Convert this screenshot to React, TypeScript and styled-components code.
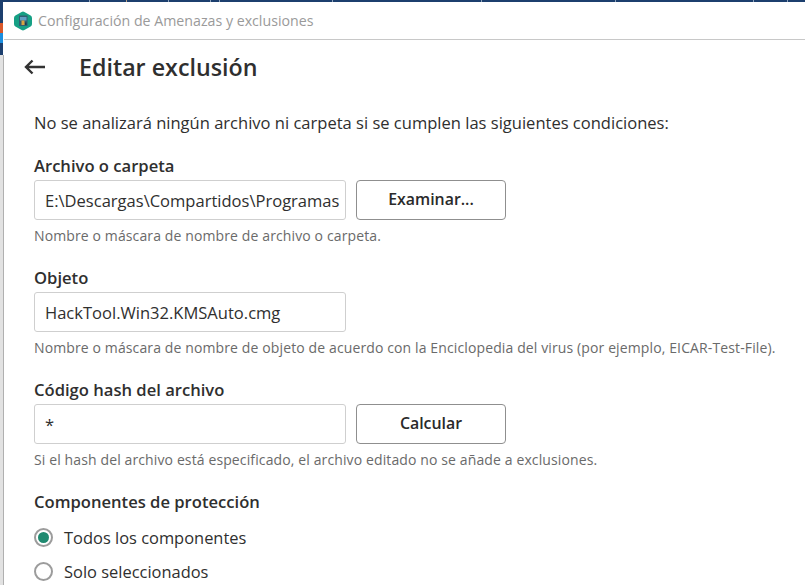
import React from "react";
import styled, { createGlobalStyle } from "styled-components";

const Global = createGlobalStyle`
  html, body { margin: 0; padding: 0; background: #fff; }
  body { font-family: "Open Sans", "Noto Sans", sans-serif; overflow: hidden; }
`;

const Desktop = styled.div`
  width: 805px;
  height: 585px;
  display: flex;
  flex-direction: column;
  overflow: hidden;
  background: #fff;
`;

const TopStrip = styled.div`
  height: 2px;
  flex: none;
  background-color: #1c3f6e;
  background-image:
    linear-gradient(#8ea3bb, #8ea3bb), linear-gradient(#b9a283, #b9a283),
    linear-gradient(#8ea3bb, #8ea3bb), linear-gradient(#8ea3bb, #8ea3bb),
    linear-gradient(#8ea3bb, #8ea3bb), linear-gradient(#8ea3bb, #8ea3bb),
    linear-gradient(#8ea3bb, #8ea3bb), linear-gradient(#8ea3bb, #8ea3bb),
    linear-gradient(#8ea3bb, #8ea3bb), linear-gradient(#8ea3bb, #8ea3bb);
  background-size: 1px 2px;
  background-repeat: no-repeat;
  background-position: 89px 0, 126px 0, 168px 0, 210px 0, 219px 0, 332px 0,
    481px 0, 615px 0, 753px 0, 787px 0;
`;

const Main = styled.div`
  flex: 1;
  min-height: 0;
  display: flex;
`;

const Edge = styled.div`
  width: 4px;
  flex: none;
  display: flex;
  flex-direction: column;
`;

const EdgeBlock = styled.div<{ $h: number; $c: string }>`
  width: 3px;
  height: ${(p) => p.$h}px;
  flex: none;
  background: ${(p) => p.$c};
`;

const EdgeRest = styled.div`
  flex: 1;
  background: #e2e2e2;
  border-right: 1px solid #b0b0b0;
`;

const Win = styled.div`
  flex: 1;
  min-width: 0;
  display: flex;
  flex-direction: column;
`;

const TitleBar = styled.div`
  height: 37px;
  flex: none;
  display: flex;
  align-items: center;
  gap: 6px;
  padding: 0 0 0 10px;
  border-bottom: 1px solid #c8c8c8;
  font-size: 14.2px;
  color: #9a9a9a;
`;

const PageHead = styled.div`
  height: 54px;
  flex: none;
  display: flex;
  align-items: center;
  gap: 31px;
  padding: 0 0 0 18px;
`;

const Heading = styled.h1`
  margin: 0;
  font-size: 23.25px;
  font-weight: 600;
  color: #2f2f2f;
`;

const Body = styled.div`
  padding: 0 0 0 30px;
  display: flex;
  flex-direction: column;
`;

const Intro = styled.p`
  margin: 18px 0 0;
  font-size: 16.55px;
  line-height: 22px;
  color: #2f2f2f;
`;

const Label = styled.div<{ $top: number }>`
  font-size: 16.6px;
  font-weight: 600;
  line-height: 22px;
  color: #2f2f2f;
  margin-top: ${(p) => p.$top}px;
`;

const Row = styled.div`
  display: flex;
  gap: 10px;
  margin-top: 3px;
`;

const Field = styled.div`
  width: 312px;
  height: 40px;
  box-sizing: border-box;
  border: 1px solid #cfcfcf;
  border-radius: 3px;
  padding: 0 6px 0 10px;
  display: flex;
  align-items: center;
  font-size: 16.55px;
  color: #2f2f2f;
  white-space: nowrap;
  overflow: hidden;
`;

const Button = styled.div`
  width: 150px;
  height: 40px;
  box-sizing: border-box;
  border: 1px solid #8f8f8f;
  border-radius: 4px;
  padding-bottom: 2px;
  display: flex;
  align-items: center;
  justify-content: center;
  font-size: 15.9px;
  font-weight: 600;
  color: #2a2a2a;
`;

const Hint = styled.div`
  font-size: 14px;
  letter-spacing: 0.12px;
  line-height: 18px;
  margin-top: 7px;
  color: #6a6a6a;
  white-space: nowrap;
`;

const Radios = styled.div`
  display: flex;
  flex-direction: column;
  gap: 12px;
  margin-top: 13px;
`;

const RadioRow = styled.div`
  display: flex;
  align-items: center;
  gap: 11px;
  height: 22px;
  font-size: 16.45px;
  color: #2f2f2f;
`;

const Radio = styled.span<{ $on?: boolean }>`
  width: 19px;
  height: 19px;
  box-sizing: border-box;
  border: 2px solid #9c9c9c;
  border-radius: 50%;
  display: flex;
  align-items: center;
  justify-content: center;
  &::after {
    content: "";
    display: ${(p) => (p.$on ? "block" : "none")};
    width: 11px;
    height: 11px;
    border-radius: 50%;
    background: #1f8a70;
  }
`;

export default function App() {
  return (
    <Desktop>
      <Global />
      <TopStrip />
      <Main>
        <Edge>
          <EdgeBlock $h={21} $c="#1c3f6e" />
          <EdgeBlock $h={10} $c="#d9582b" />
          <EdgeBlock $h={10} $c="#1b8fe0" />
          <EdgeBlock $h={12} $c="#1c3f6e" />
          <EdgeRest />
        </Edge>
        <Win>
          <TitleBar>
            <svg width="18" height="20" viewBox="0 0 18 20">
              <path
                d="M7.6 0.9 Q9 0.1 10.4 0.9 L16.6 4.5 Q18 5.3 18 6.9 V13.1 Q18 14.7 16.6 15.5 L10.4 19.1 Q9 19.9 7.6 19.1 L1.4 15.5 Q0 14.7 0 13.1 V6.9 Q0 5.3 1.4 4.5 Z"
                fill="#16a085"
              />
              <rect x="5" y="4.5" width="8.5" height="10.5" fill="#2f5f73" />
              <rect x="6" y="6" width="6.5" height="3.5" fill="#5f9fc4" />
              <rect x="7.5" y="9.5" width="3" height="4.5" fill="#d9a441" />
              <rect x="11" y="11.5" width="1.5" height="2.5" fill="#1d3c4c" />
            </svg>
            Configuración de Amenazas y exclusiones
          </TitleBar>
          <PageHead>
            <svg width="26" height="20" viewBox="0 0 26 20" fill="none" stroke="#333" strokeWidth="2.4">
              <path d="M23 10 H4 M10.5 3.5 L4 10 L10.5 16.5" />
            </svg>
            <Heading>Editar exclusión</Heading>
          </PageHead>
          <Body>
            <Intro>No se analizará ningún archivo ni carpeta si se cumplen las siguientes condiciones:</Intro>
            <Label $top={21}>Archivo o carpeta</Label>
            <Row>
              <Field>E:\Descargas\Compartidos\Programas</Field>
              <Button>Examinar...</Button>
            </Row>
            <Hint>Nombre o máscara de nombre de archivo o carpeta.</Hint>
            <Label $top={22}>Objeto</Label>
            <Row>
              <Field>HackTool.Win32.KMSAuto.cmg</Field>
            </Row>
            <Hint>Nombre o máscara de nombre de objeto de acuerdo con la Enciclopedia del virus (por ejemplo, EICAR-Test-File).</Hint>
            <Label $top={22}>Código hash del archivo</Label>
            <Row>
              <Field>*</Field>
              <Button>Calcular</Button>
            </Row>
            <Hint>Si el hash del archivo está especificado, el archivo editado no se añade a exclusiones.</Hint>
            <Label $top={22}>Componentes de protección</Label>
            <Radios>
              <RadioRow><Radio $on />Todos los componentes</RadioRow>
              <RadioRow><Radio />Solo seleccionados</RadioRow>
            </Radios>
          </Body>
        </Win>
      </Main>
    </Desktop>
  );
}
